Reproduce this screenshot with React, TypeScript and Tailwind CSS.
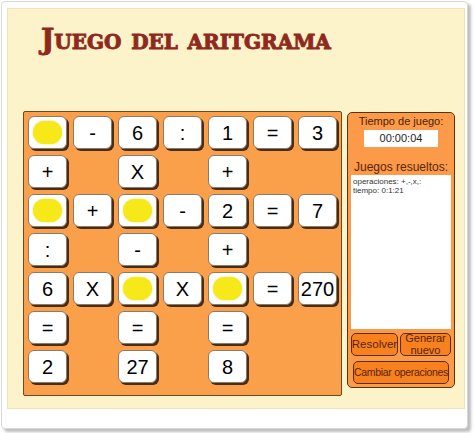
import React from "react";

type Cell = string | null;

const Y = "●";

const ROWS: Cell[][] = [
  [Y, "-", "6", ":", "1", "=", "3"],
  ["+", null, "X", null, "+", null, null],
  [Y, "+", Y, "-", "2", "=", "7"],
  [":", null, "-", null, "+", null, null],
  ["6", "X", Y, "X", Y, "=", "270"],
  ["=", null, "=", null, "=", null, null],
  ["2", null, "27", null, "8", null, null],
];

const Tile: React.FC<{ value: string }> = ({ value }) => (
  <div className="flex h-[33px] w-[39px] items-center justify-center rounded-[6px] border border-[#8a7a6a] bg-white text-[20px] leading-none text-black shadow-[2px_2px_0_#4a2c12]">
    {value === Y ? (
      <span className="block h-[23px] w-[29px] rounded-full bg-[#f7e81a] shadow-[0_0_2px_#f2e04a]" />
    ) : (
      value
    )}
  </div>
);

const OrangeButton: React.FC<{ className?: string; children: React.ReactNode }> = ({
  className,
  children,
}) => (
  <button
    className={
      "flex items-center justify-center whitespace-nowrap rounded-[5px] border border-[#5a2c0c] bg-[#f7811f] text-center leading-[12px] text-[#5a230a] " +
      (className ?? "")
    }
  >
    {children}
  </button>
);

export default function App() {
  return (
    <div className="h-[433px] w-[474px] bg-white font-['Liberation_Sans',Arial,sans-serif]">
      <div className="ml-px mt-px h-[428px] w-[467px] rounded-[4px] border border-[#d8d8d8] bg-white pl-[5px] pt-[6px] shadow-[3px_3px_3px_#bdbdbd]">
        <div className="h-[401px] w-[458px] border border-[#efe3bd] bg-[#fdf3cb]">
          <h1 className="ml-[33px] mt-[16px] h-[86px] font-['DejaVu_Serif',serif] text-[28px] font-bold leading-[30px] tracking-[0px] text-[#8e2a1d] [-webkit-text-stroke:0.9px_#8e2a1d] [font-variant:small-caps]">
            Juego del aritgrama
          </h1>
          <div className="flex items-start">
            <div className="ml-[15px] h-[285px] w-[319px] rounded-[2px] border border-[#6b4a2a] bg-[#fa9f4a] pl-[4px] pt-[4px]">
              <div className="grid grid-cols-[repeat(7,39px)] grid-rows-[repeat(7,33px)] gap-x-[6px] gap-y-[6px]">
                {ROWS.flatMap((row, r) =>
                  row.map((cell, c) =>
                    cell === null ? (
                      <div key={`${r}-${c}`} />
                    ) : (
                      <Tile key={`${r}-${c}`} value={cell} />
                    )
                  )
                )}
              </div>
            </div>
            <div className="ml-[5px] mt-px flex h-[276px] w-[108px] flex-col items-center rounded-[5px] border-[1.5px] border-[#5a3210] bg-[#fb9a48] px-[3px] pb-[3px] pt-[2px]">
              <div className="text-[11px] leading-[13px] text-[#4a2208]">Tiempo de juego:</div>
              <div className="mt-[2px] flex h-[17px] w-[74px] items-center justify-center bg-white text-[11px] text-[#222]">
                00:00:04
              </div>
              <div className="mt-[13px] text-[12px] leading-[14px] text-[#5a230a]">
                Juegos resueltos:
              </div>
              <div className="mt-[1px] h-[159px] w-full bg-white px-[2px] pt-[2px] text-[8px] leading-[9px] text-[#333]">
                <div>operaciones: +,-,x,:</div>
                <div>tiempo: 0:1:21</div>
              </div>
              <div className="mt-[4px] flex w-full gap-[2px]">
                <OrangeButton className="h-[23px] w-[47px] text-[11.5px]">Resolver</OrangeButton>
                <OrangeButton className="h-[23px] flex-1 text-[11px]">
                  Generar
                  <br />
                  nuevo
                </OrangeButton>
              </div>
              <OrangeButton className="mt-[5px] h-[24px] w-[96px] text-[10.5px] tracking-[-0.3px]">
                Cambiar operaciones
              </OrangeButton>
            </div>
          </div>
        </div>
      </div>
    </div>
  );
}
